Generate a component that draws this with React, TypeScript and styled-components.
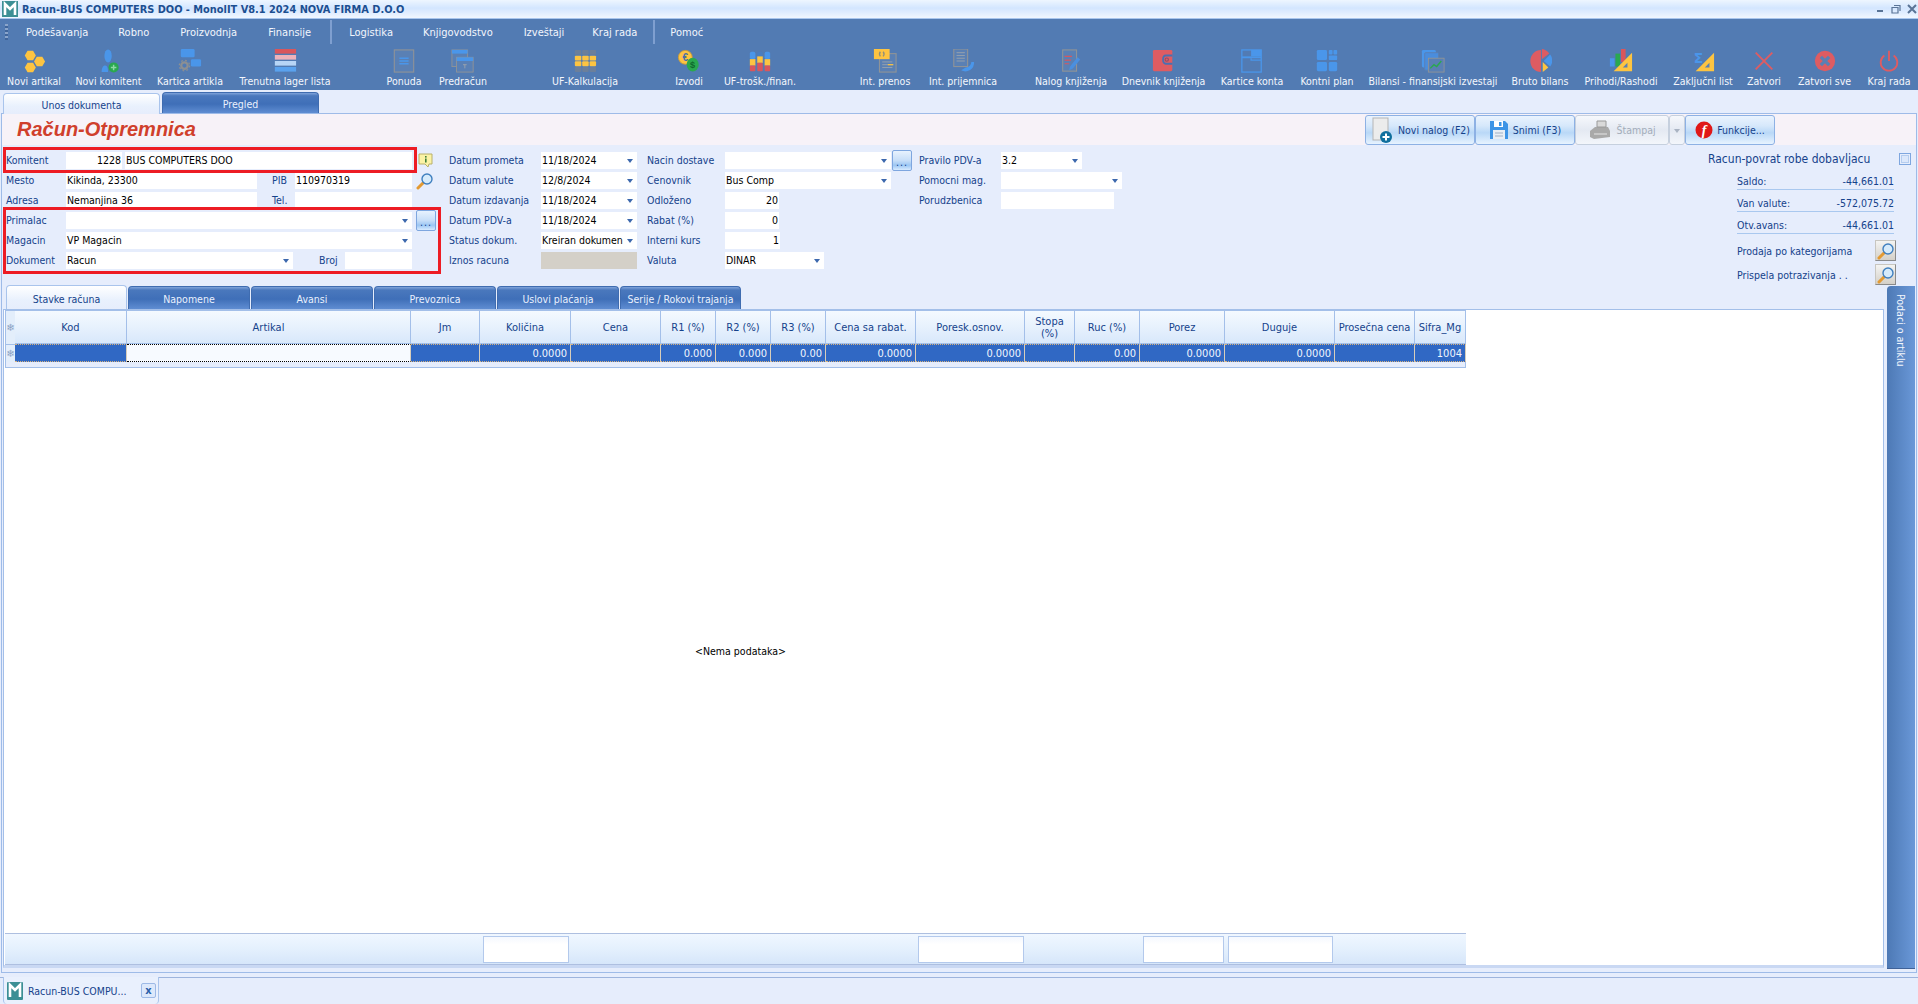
import styled, { createGlobalStyle } from "styled-components"
import { ReactNode } from "react"

const GlobalStyle = createGlobalStyle`
    html, body {
        margin: 0;
        padding: 0;
        background: #e6edfc;
    }
    * {
        box-sizing: border-box;
    }
`

const NAVY = "#15428b"
const EDGE = "#a3bfe9"

const hex = (cx: number, cy: number, r: number) =>
    [0, 60, 120, 180, 240, 300].map(a => `${cx + r * Math.cos(a * Math.PI / 180)},${cy + r * Math.sin(a * Math.PI / 180)}`).join(" ")

const Icon = ({ children, size = 24 }: { children: ReactNode, size?: number }) =>
    <svg width={size} height={size} viewBox="0 0 26 26">{children}</svg>

const DocOutline = ({ x, y, w, h }: { x: number, y: number, w: number, h: number }) =>
    <rect x={x} y={y} width={w} height={h} fill="#5a80b4" stroke="#8f9397" strokeWidth="1.2" />

const toolIcons: Record<string, ReactNode> = {
    artikal: <Icon>
        <polygon points={hex(9, 7, 6)} fill="#fdc441" />
        <polygon points={hex(9, 20, 6)} fill="#fdc441" />
        <polygon points={hex(19, 13.5, 6)} fill="#fdc441" />
    </Icon>,
    komitent: <Icon>
        <ellipse cx="12" cy="7.500" rx="4" ry="7" fill="#4a96ea" />
        <path d="M5 25 C5 20 7 18 9 18 C11 18 12 21 12 25 Z" fill="#4a96ea" />
        <circle cx="18" cy="20" r="5.500" fill="#2aa84f" />
        <path d="M18 17 V23 M15 20 H21" stroke="#8fd8a5" strokeWidth="1.6" />
    </Icon>,
    kartica: <Icon>
        <rect x="3" y="0" width="15" height="9" rx="1.5" fill="#4a96ea" />
        <rect x="14" y="11" width="11" height="8" rx="1.5" fill="#4a96ea" />
        <circle cx="7" cy="18" r="3.5" fill="none" stroke="#8c8f92" strokeWidth="2.4" />
        <circle cx="7" cy="18" r="5.6" fill="none" stroke="#8c8f92" strokeWidth="1.4" strokeDasharray="2 2.4" />
    </Icon>,
    lager: <Icon>
        <rect x="2" y="0" width="23" height="5" fill="#d9565c" />
        <rect x="2" y="6.5" width="23" height="5" fill="#eeb2ba" />
        <rect x="2" y="13" width="23" height="5" fill="#b7d5f6" />
        <rect x="2" y="19.5" width="23" height="5" fill="#5aa2ee" />
    </Icon>,
    ponuda: <Icon>
        <DocOutline x={2.5} y={1} w={21} h={24} />
        <path d="M8 10 H18 M8 13 H18 M8 16 H18" stroke="#4a96ea" strokeWidth="1.4" />
    </Icon>,
    predracun: <Icon>
        <rect x="1" y="1" width="17" height="18" fill="#5a80b4" stroke="#8f9397" />
        <rect x="1" y="1" width="17" height="4" fill="#4a96ea" />
        <rect x="6" y="9" width="18" height="16" fill="#5a80b4" stroke="#8f9397" />
        <rect x="6" y="9" width="18" height="4" fill="#4a96ea" />
        <path d="M13 17 H17 M15 17 V21" stroke="#9aa3ad" strokeWidth="1" />
    </Icon>,
    kalk: <Icon>
        {[0, 1, 2].map(c => [0, 1, 2, 3].map(r =>
            <rect key={`${c}${r}`} x={2 + c * 8} y={1 + r * 6.2} width="7" height="5.2" rx="1" fill={r === 1 || r === 2 ? "#fdc441" : "#6b7f9b"} />))}
    </Icon>,
    izvodi: <Icon>
        <circle cx="9" cy="9" r="7.5" fill="#fdc441" stroke="#c99a3a" strokeWidth="1" />
        <text x="9" y="13" textAnchor="middle" fontSize="11" fontWeight="700" fill="#4a6fa5" fontFamily="Liberation Sans">€</text>
        <ellipse cx="17" cy="17" rx="6.5" ry="7.5" fill="#2aa84f" />
        <text x="17" y="21" textAnchor="middle" fontSize="10" fontWeight="700" fill="#0f6a2c" fontFamily="Liberation Sans">$</text>
    </Icon>,
    trosk: <Icon>
        {[2, 10, 18].map((x, i) => <g key={x}>
            <rect x={x} y="3" width="6" height="8" rx="2" fill={i === 1 ? "#4a7dc0" : "#4a96ea"} />
            <rect x={x} y={i === 1 ? 8 : 11} width="6" height="7" fill="#fdc441" />
            <rect x={x} y={i === 1 ? 15 : 18} width="6" height={i === 1 ? 9 : 6} rx="1" fill="#d9565c" />
        </g>)}
    </Icon>,
    prenos: <Icon>
        <DocOutline x={7} y={5} w={18} h={20} />
        <path d="M10 14 H21 M10 17 H16 M10 20 H21" stroke="#9aa3ad" strokeWidth="1" />
        <path d="M16 17 H22" stroke="#fdc441" strokeWidth="1.4" />
        <rect x="1" y="0" width="17" height="11" fill="#fdc441" />
        <path d="M8 3 Q6 5.500 8 8 M11 3 Q13 5.500 11 8" stroke="#8f8f7a" strokeWidth="1.4" fill="none" />
    </Icon>,
    prijemnica: <Icon>
        <path d="M25 14 A9.500 9.500 0 0 1 11 23 L16 20 A6 6 0 0 0 22 14 Z" fill="#4a96ea" />
        <DocOutline x={3} y={0} w={15} h={19} />
        <path d="M6 4 H15 M6 7 H15 M6 10 H15 M6 13 H15" stroke="#9aa3ad" strokeWidth="1" />
    </Icon>,
    nalog: <Icon>
        <DocOutline x={4} y={1} w={15} h={23} />
        <path d="M6 8 H14 M6 12 H13 M6 16 H11" stroke="#d9565c" strokeWidth="1.3" />
        <path d="M12 19 L20 9 L23 11.500 L15 21 L11 23 Z" fill="#4a8fe0" />
    </Icon>,
    dnevnik: <Icon>
        <rect x="1" y="1" width="21" height="23" rx="1.5" fill="#de5c62" />
        <path d="M22 7 H15 Q12 7 12 11.500 Q12 16 15 16 H22" fill="none" stroke="#4b6fb0" strokeWidth="2" />
        <circle cx="16" cy="11.500" r="1.8" fill="none" stroke="#8d4d6a" strokeWidth="1.2" />
    </Icon>,
    kartice: <Icon>
        <rect x="2" y="1" width="21" height="24" fill="none" stroke="#4a96ea" strokeWidth="1.4" />
        <rect x="2" y="8" width="21" height="2" fill="#4a96ea" />
        <rect x="12" y="1" width="11" height="7" fill="#4a96ea" />
        <path d="M12 10 V12 H23" stroke="#4a96ea" strokeWidth="1.4" fill="none" />
    </Icon>,
    kontni: <Icon>
        <rect x="2" y="1" width="11" height="11" rx="1.5" fill="#4a96ea" />
        <rect x="15" y="1" width="4" height="5" rx="1" fill="#4a96ea" />
        <rect x="20" y="1" width="4" height="5" rx="1" fill="#4a96ea" />
        <rect x="15" y="7" width="9" height="5" rx="1" fill="#4a96ea" />
        <rect x="2" y="14" width="11" height="10" rx="1.5" fill="#4a96ea" />
        <rect x="15" y="14" width="9" height="10" rx="1.5" fill="#4a96ea" />
    </Icon>,
    bilansi: <Icon>
        <rect x="1" y="1" width="15" height="19" rx="1.5" fill="#4a96ea" />
        <rect x="4" y="4" width="15" height="19" rx="1" fill="#4a8ddd" stroke="#5a80b4" />
        <rect x="8" y="10" width="17" height="15" fill="#5a80b4" stroke="#8f9397" />
        <path d="M10 21 L14 17 L17 19 L22 13" stroke="#2aa84f" strokeWidth="1.5" fill="none" />
    </Icon>,
    bruto: <Icon>
        <path d="M14 12 L14 1 A11.500 12 0 1 0 14 25 Z" fill="#de5c62" />
        <path d="M15 0 A11 11 0 0 1 23 5 L15 11 Z" fill="#de5c62" />
        <path d="M24 6 A11 11 0 0 1 24 19 L17 13 Z" fill="#4a96ea" />
        <path d="M16 14 L22 20 L16 25 Z" fill="#fdc441" />
    </Icon>,
    prihodi: <Icon>
        <rect x="1" y="10" width="5" height="9" fill="#4a96ea" />
        <rect x="7" y="5" width="5" height="14" fill="#2aa84f" />
        <rect x="13" y="0" width="5" height="14" fill="#d9565c" />
        <path d="M25 4 V24 H5 Z" fill="#fdc441" />
        <path d="M20 15 V20 H15 Z" fill="#5a80b4" />
    </Icon>,
    zakljucni: <Icon>
        <text x="8" y="15" textAnchor="middle" fontSize="15" fontWeight="700" fill="#4a96ea" fontFamily="DejaVu Sans">Σ</text>
        <path d="M25 4 V24 H5 Z" fill="#fdc441" />
        <path d="M20 15 V20 H15 Z" fill="#5a80b4" />
    </Icon>,
    zatvori: <Icon>
        <path d="M4 4 L22 22 M22 4 L4 22" stroke="#de5c62" strokeWidth="2" />
    </Icon>,
    zatvoriSve: <Icon>
        <circle cx="13" cy="13" r="11" fill="#de5c62" />
        <path d="M8.500 8.500 L17.500 17.500 M17.500 8.500 L8.500 17.500" stroke="#5a80b4" strokeWidth="3.600" />
    </Icon>,
    krajRada: <Icon>
        <path d="M8 7 A9 9 0 1 0 18 7" fill="none" stroke="#de5c62" strokeWidth="2" />
        <path d="M13 2 V13" stroke="#de5c62" strokeWidth="2" />
    </Icon>,
}

const tools = [
    { label: "Novi artikal", icon: "artikal", w: 68, gap: 0 },
    { label: "Novi komitent", icon: "komitent", w: 81, gap: 0 },
    { label: "Kartica artikla", icon: "kartica", w: 82, gap: 0 },
    { label: "Trenutna lager lista", icon: "lager", w: 108, gap: 0 },
    { label: "Ponuda", icon: "ponuda", w: 40, gap: 45 },
    { label: "Predračun", icon: "predracun", w: 78, gap: 0 },
    { label: "UF-Kalkulacija", icon: "kalk", w: 76, gap: 45 },
    { label: "Izvodi", icon: "izvodi", w: 40, gap: 46 },
    { label: "UF-trošk./finan.", icon: "trosk", w: 102, gap: 0 },
    { label: "Int. prenos", icon: "prenos", w: 70, gap: 39 },
    { label: "Int. prijemnica", icon: "prijemnica", w: 86, gap: 0 },
    { label: "Nalog knjiženja", icon: "nalog", w: 80, gap: 25 },
    { label: "Dnevnik knjiženja", icon: "dnevnik", w: 105, gap: 0 },
    { label: "Kartice konta", icon: "kartice", w: 72, gap: 0 },
    { label: "Kontni plan", icon: "kontni", w: 78, gap: 0 },
    { label: "Bilansi - finansijski izvestaji", icon: "bilansi", w: 134, gap: 0 },
    { label: "Bruto bilans", icon: "bruto", w: 80, gap: 0 },
    { label: "Prihodi/Rashodi", icon: "prihodi", w: 82, gap: 0 },
    { label: "Zaključni list", icon: "zakljucni", w: 82, gap: 0 },
    { label: "Zatvori", icon: "zatvori", w: 40, gap: 0 },
    { label: "Zatvori sve", icon: "zatvoriSve", w: 81, gap: 0 },
    { label: "Kraj rada", icon: "krajRada", w: 48, gap: 0 },
]

const columns = [
    { title: "Kod", w: 112, value: "" },
    { title: "Artikal", w: 284, value: "", editing: true },
    { title: "Jm", w: 69, value: "" },
    { title: "Količina", w: 91, value: "0.0000" },
    { title: "Cena", w: 90, value: "" },
    { title: "R1 (%)", w: 55, value: "0.000" },
    { title: "R2 (%)", w: 55, value: "0.000" },
    { title: "R3 (%)", w: 55, value: "0.00" },
    { title: "Cena sa rabat.", w: 90, value: "0.0000" },
    { title: "Poresk.osnov.", w: 109, value: "0.0000" },
    { title: "Stopa (%)", w: 50, value: "" },
    { title: "Ruc (%)", w: 65, value: "0.00" },
    { title: "Porez", w: 85, value: "0.0000" },
    { title: "Duguje", w: 110, value: "0.0000" },
    { title: "Prosečna cena", w: 80, value: "" },
    { title: "Sifra_Mg", w: 51, value: "1004" },
]

const Field = ({ label, labelW, w, value, arrow, right, grey }: { label: string, labelW: number, w: number, value?: string, arrow?: boolean, right?: boolean, grey?: boolean }) =>
    <FormRow>
        <Label $w={labelW}>{label}</Label>
        <Input $w={w} $right={right} $grey={grey}>
            <span>{value}</span>
            {arrow && <Arrow />}
        </Input>
    </FormRow>

const SearchGlass = () => <svg width="18" height="18" viewBox="0 0 18 18">
    <path d="M7 11 L2 16" stroke="#e39a32" strokeWidth="3" strokeLinecap="round" />
    <circle cx="11" cy="7" r="5" fill="#d6ebfb" stroke="#3f7fbf" strokeWidth="1.4" />
</svg>

const App = () => <Page>
    <GlobalStyle />
    <TitleBar>
        <svg width="16" height="16" viewBox="0 0 16 16">
            <rect width="16" height="16" fill="#3c8f95" />
            <path d="M3 14 V3 L8 8 L13 3 V14" stroke="#fff" strokeWidth="2.600" fill="none" />
        </svg>
        <TitleText>Racun-BUS COMPUTERS DOO - MonolIT V8.1 2024 NOVA FIRMA D.O.O</TitleText>
        <WindowButtons>
            <svg width="10" height="10" viewBox="0 0 10 10"><rect x="2" y="6" width="6" height="2" fill="#5a7497" /></svg>
            <svg width="10" height="10" viewBox="0 0 10 10"><path d="M1 3.500 H7 V9 H1 Z M3 1.500 H9 V7" fill="none" stroke="#5a7497" strokeWidth="1.200" /></svg>
            <svg width="10" height="10" viewBox="0 0 10 10"><path d="M1 1 L9 9 M9 1 L1 9" stroke="#5a7497" strokeWidth="2" /></svg>
        </WindowButtons>
    </TitleBar>
    <MenuStrip>
        <Grip />
        <MenuItem $gap={18}>Podešavanja</MenuItem>
        <MenuItem $gap={30}>Robno</MenuItem>
        <MenuItem $gap={31}>Proizvodnja</MenuItem>
        <MenuItem $gap={31}>Finansije</MenuItem>
        <MenuSeparator $gap={19} />
        <MenuItem $gap={17}>Logistika</MenuItem>
        <MenuItem $gap={30}>Knjigovodstvo</MenuItem>
        <MenuItem $gap={31}>Izveštaji</MenuItem>
        <MenuItem $gap={28}>Kraj rada</MenuItem>
        <MenuSeparator $gap={16} />
        <MenuItem $gap={15}>Pomoć</MenuItem>
    </MenuStrip>
    <Toolbar>
        {tools.map(t => <ToolButton key={t.label} $w={t.w} $gap={t.gap}>
            <ToolIcon>{toolIcons[t.icon]}</ToolIcon>
            <ToolLabel>{t.label}</ToolLabel>
        </ToolButton>)}
    </Toolbar>
    <DocTabs>
        <ActiveTab $w={157}>Unos dokumenta</ActiveTab>
        <BlueTab $w={157}>Pregled</BlueTab>
    </DocTabs>
    <MainPanel>
        <DocHeader>
            <DocTitle>Račun-Otpremnica</DocTitle>
            <ActionBar>
                <ActionButton $w={110}>
                    <svg width="24" height="26" viewBox="0 0 24 26">
                        <rect x="3" y="1" width="15" height="22" fill="#ececec" stroke="#b5b5b5" />
                        <circle cx="16" cy="20" r="6" fill="#0f6f9d" />
                        <path d="M16 16.500 V23.500 M12.500 20 H19.500" stroke="#fff" strokeWidth="2" />
                    </svg>
                    Novi nalog (F2)
                </ActionButton>
                <ActionButton $w={100}>
                    <svg width="20" height="20" viewBox="0 0 20 20">
                        <path d="M1 1 H16 L19 4 V19 H1 Z" fill="#3d94e6" />
                        <rect x="5" y="1" width="9" height="6" fill="#fff" />
                        <rect x="10" y="2" width="2.500" height="4" fill="#3d94e6" />
                        <rect x="4" y="10" width="12" height="9" fill="#e8eef5" />
                        <path d="M6 13 H14 M6 16 H14" stroke="#9fb0c4" />
                    </svg>
                    Snimi (F3)
                </ActionButton>
                <ActionButton $w={94} $disabled>
                    <svg width="24" height="20" viewBox="0 0 24 20">
                        <path d="M2 11 L7 7 H20 L22 11 V17 L6 19 L2 17 Z" fill="#a9a9a9" />
                        <path d="M9 7 V1 H18 V7 Z" fill="#d9d9d9" stroke="#9a9a9a" />
                        <path d="M6 14 H19" stroke="#e5e5e5" />
                    </svg>
                    Štampaj
                </ActionButton>
                <ActionDrop><Arrow $muted /></ActionDrop>
                <ActionButton $w={90}>
                    <svg width="18" height="18" viewBox="0 0 18 18">
                        <circle cx="9" cy="9" r="8.500" fill="#e01818" />
                        <text x="9" y="14" textAnchor="middle" fontSize="14" fontStyle="italic" fontWeight="700" fill="#fff" fontFamily="Liberation Serif">f</text>
                    </svg>
                    Funkcije...
                </ActionButton>
            </ActionBar>
        </DocHeader>
        <FormArea>
            <LeftColumn>
                <RedFrame $top={-5} $height={26} $width={414} />
                <RedFrame $top={55} $height={67} $width={438} />
                <FormRow>
                    <Label $w={60}>Komitent</Label>
                    <Input $w={56} $right><span>1228</span></Input>
                    <Input $w={287} $gap={3}><span>BUS COMPUTERS DOO</span></Input>
                    <RowIcon $gap={6}>
                        <svg width="15" height="15" viewBox="0 0 15 15">
                            <path d="M1 1 H14 V11 H11 L10 14 L7 11 H1 Z" fill="#fbf3a6" stroke="#b8b06a" />
                            <rect x="7" y="3" width="1.600" height="1.600" fill="#3f7f3a" />
                            <rect x="7" y="5.500" width="1.600" height="4" fill="#3f7f3a" />
                        </svg>
                    </RowIcon>
                </FormRow>
                <FormRow>
                    <Label $w={60}>Mesto</Label>
                    <Input $w={191}><span>Kikinda, 23300</span></Input>
                    <Label $w={23} $gap={15}>PIB</Label>
                    <Input $w={117}><span>110970319</span></Input>
                    <RowIcon $gap={4}><SearchGlass /></RowIcon>
                </FormRow>
                <FormRow>
                    <Label $w={60}>Adresa</Label>
                    <Input $w={191}><span>Nemanjina 36</span></Input>
                    <Label $w={23} $gap={15}>Tel.</Label>
                    <Input $w={117} />
                </FormRow>
                <FormRow>
                    <Label $w={60}>Primalac</Label>
                    <Input $w={346}><span /><Arrow /></Input>
                    <DotsButton $gap={4}>...</DotsButton>
                </FormRow>
                <Field label="Magacin" labelW={60} w={346} value="VP Magacin" arrow />
                <FormRow>
                    <Label $w={60}>Dokument</Label>
                    <Input $w={227}><span>Racun</span><Arrow /></Input>
                    <Label $w={26} $gap={26}>Broj</Label>
                    <Input $w={67} />
                </FormRow>
            </LeftColumn>
            <DateColumn>
                <Field label="Datum prometa" labelW={92} w={96} value="11/18/2024" arrow />
                <Field label="Datum valute" labelW={92} w={96} value="12/8/2024" arrow />
                <Field label="Datum izdavanja" labelW={92} w={96} value="11/18/2024" arrow />
                <Field label="Datum PDV-a" labelW={92} w={96} value="11/18/2024" arrow />
                <Field label="Status dokum." labelW={92} w={96} value="Kreiran dokumen" arrow />
                <Field label="Iznos racuna" labelW={92} w={96} grey />
            </DateColumn>
            <PriceColumn>
                <FormRow>
                    <Label $w={78}>Nacin dostave</Label>
                    <Input $w={166}><span /><Arrow /></Input>
                    <DotsButton $gap={1}>...</DotsButton>
                </FormRow>
                <Field label="Cenovnik" labelW={78} w={166} value="Bus Comp" arrow />
                <Field label="Odloženo" labelW={78} w={54} value="20" right />
                <Field label="Rabat (%)" labelW={78} w={54} value="0" right />
                <Field label="Interni kurs" labelW={78} w={55} value="1" right />
                <Field label="Valuta" labelW={78} w={99} value="DINAR" arrow />
            </PriceColumn>
            <TaxColumn>
                <Field label="Pravilo PDV-a" labelW={82} w={81} value="3.2" arrow />
                <Field label="Pomocni mag." labelW={82} w={121} arrow />
                <Field label="Porudzbenica" labelW={82} w={113} />
            </TaxColumn>
            <SummaryColumn>
                <ReturnRow>
                    Racun-povrat robe dobavljacu
                    <CheckBox />
                </ReturnRow>
                <SummaryRow><span>Saldo:</span><span>-44,661.01</span></SummaryRow>
                <SummaryRow><span>Van valute:</span><span>-572,075.72</span></SummaryRow>
                <SummaryRow><span>Otv.avans:</span><span>-44,661.01</span></SummaryRow>
                <LookupRow $gap={6}>Prodaja po kategorijama<LookupButton><SearchGlass /></LookupButton></LookupRow>
                <LookupRow $gap={3}>Prispela potrazivanja . .<LookupButton><SearchGlass /></LookupButton></LookupRow>
            </SummaryColumn>
        </FormArea>
        <LowerArea>
            <LowerLeft>
                <SectionTabs>
                    <ActiveTab $w={121}>Stavke računa</ActiveTab>
                    <BlueTab $w={122}>Napomene</BlueTab>
                    <BlueTab $w={122}>Avansi</BlueTab>
                    <BlueTab $w={122}>Prevoznica</BlueTab>
                    <BlueTab $w={122}>Uslovi plaćanja</BlueTab>
                    <BlueTab $w={121}>Serije / Rokovi trajanja</BlueTab>
                </SectionTabs>
                <GridPanel>
                    <GridHead>
                        <RowMark $h={34}>❄</RowMark>
                        {columns.map(c => <HeadCell key={c.title} $w={c.w}>{c.title}</HeadCell>)}
                    </GridHead>
                    <GridRow>
                        <RowMark $h={18}>❄</RowMark>
                        {columns.map(c => <DataCell key={c.title} $w={c.w} $editing={c.editing}>{c.value}</DataCell>)}
                    </GridRow>
                    <GridPad />
                    <EmptyArea>&lt;Nema podataka&gt;</EmptyArea>
                    <GridFooter>
                        <FooterBox $w={86} $gap={478} />
                        <FooterBox $w={106} $gap={349} />
                        <FooterBox $w={81} $gap={119} />
                        <FooterBox $w={105} $gap={4} />
                    </GridFooter>
                </GridPanel>
            </LowerLeft>
            <SideTab>Podaci o artiklu</SideTab>
        </LowerArea>
    </MainPanel>
    <WindowBar>
        <WindowTab>
            <svg width="16" height="18" viewBox="0 0 16 18">
                <rect width="16" height="18" rx="1" fill="#3c8f95" />
                <path d="M3 15 V3 L8 8 L13 3 V15" stroke="#fff" strokeWidth="2.600" fill="none" />
            </svg>
            <WindowTabText>Racun-BUS COMPU...</WindowTabText>
            <CloseBox>x</CloseBox>
        </WindowTab>
    </WindowBar>
</Page>

export default App

const Page = styled.div`
    width: 1918px;
    height: 1004px;
    display: flex;
    flex-direction: column;
    overflow: hidden;
    background: #e6edfc;
    color: ${NAVY};
    font-family: "DejaVu Sans Condensed", "Liberation Sans", sans-serif;
    font-size: 11px;
`

const TitleBar = styled.div`
    flex: 0 0 19px;
    display: flex;
    align-items: center;
    padding-left: 2px;
    background: linear-gradient(#eef6ff, #d3e6ff 45%, #e0edff 70%, #f1f7ff);
    border-bottom: 1px solid #a9c6ee;
`

const TitleText = styled.div`
    margin-left: 4px;
    font-size: 10.9px;
    font-weight: 700;
    color: #1c4f91;
`

const WindowButtons = styled.div`
    margin-left: auto;
    display: flex;
    gap: 6px;
    padding-right: 1px;
`

const MenuStrip = styled.div`
    flex: 0 0 26px;
    display: flex;
    align-items: center;
    background: #527bb3;
    padding-left: 4px;
`

const Grip = styled.div`
    width: 3px;
    height: 16px;
    margin-left: 1px;
    background: repeating-linear-gradient(#8aa5cb 0 2px, #3f659b 2px 4px);
`

const MenuItem = styled.div<{ $gap: number }>`
    margin-left: ${({ $gap }) => $gap}px;
    color: #f2f6fd;
    white-space: nowrap;
`

const MenuSeparator = styled.div<{ $gap: number }>`
    width: 2px;
    height: 24px;
    margin-left: ${({ $gap }) => $gap}px;
    background: #7f9fd0;
`

const Toolbar = styled.div`
    flex: 0 0 45px;
    display: flex;
    background: #527bb3;
`

const ToolButton = styled.div<{ $w: number, $gap: number }>`
    flex: 0 0 ${({ $w }) => $w}px;
    margin-left: ${({ $gap }) => $gap}px;
    display: flex;
    flex-direction: column;
    align-items: center;
    white-space: nowrap;
`

const ToolIcon = styled.div`
    height: 29px;
    padding-top: 4px;
    display: flex;
    justify-content: center;
    svg {
        display: block;
    }
`

const ToolLabel = styled.div`
    font-size: 10.5px;
    line-height: 14px;
    color: #f4f7fd;
`

const DocTabs = styled.div`
    flex: 0 0 23px;
    display: flex;
    align-items: flex-end;
    gap: 2px;
    padding-left: 3px;
    padding-top: 2px;
`

const ActiveTab = styled.div<{ $w: number }>`
    flex: 0 0 ${({ $w }) => $w}px;
    height: 100%;
    display: flex;
    align-items: center;
    justify-content: center;
    padding-top: 2px;
    font-size: 10.5px;
    color: ${NAVY};
    background: linear-gradient(#ffffff, #e9f1fd 60%, #e6edfc);
    border: 1px solid #a9c4ec;
    border-bottom: none;
    border-radius: 4px 4px 0 0;
    position: relative;
    z-index: 1;
    margin-bottom: -1px;
`

const BlueTab = styled.div<{ $w: number }>`
    flex: 0 0 ${({ $w }) => $w}px;
    height: 100%;
    display: flex;
    align-items: center;
    justify-content: center;
    padding-top: 2px;
    white-space: nowrap;
    font-size: 10.5px;
    color: #eaf1fe;
    background: linear-gradient(#7fa3da, #4a78bd 14%, #3f6fb8 55%, #5f8dd2);
    border: 1px solid #3f6cb0;
    border-bottom: none;
    border-radius: 4px 4px 0 0;
`

const MainPanel = styled.div`
    flex: 0 0 860px;
    margin: 0 1px;
    display: flex;
    flex-direction: column;
    border: 1px solid #9ebbe8;
`

const DocHeader = styled.div`
    flex: 0 0 31px;
    display: flex;
    align-items: flex-start;
    background: #f7f2f8;
    padding-left: 15px;
`

const DocTitle = styled.div`
    font-family: "Liberation Sans", sans-serif;
    font-size: 20px;
    font-weight: 700;
    font-style: italic;
    color: #d03f2c;
    line-height: 30px;
`

const ActionBar = styled.div`
    margin-left: auto;
    margin-right: 141px;
    padding-top: 1px;
    display: flex;
`

const ActionButton = styled.div<{ $w: number, $disabled?: boolean }>`
    width: ${({ $w }) => $w}px;
    height: 30px;
    display: flex;
    align-items: center;
    justify-content: center;
    gap: 4px;
    white-space: nowrap;
    font-size: 10.5px;
    color: ${({ $disabled }) => $disabled ? "#a3adba" : NAVY};
    background: ${({ $disabled }) => $disabled
        ? "linear-gradient(#f6f8fc, #e4e9f2 50%, #f3f6fb)"
        : "linear-gradient(#eaf3fe, #d6e8fb 35%, #b9d8f7 60%, #e7f3ff)"};
    border: 1px solid ${({ $disabled }) => $disabled ? "#c6d0de" : "#8db1e4"};
    border-radius: 3px;
`

const ActionDrop = styled(ActionButton).attrs({ $w: 16, $disabled: true })``

const FormArea = styled.div`
    flex: 0 0 140px;
    min-height: 0;
    display: flex;
    padding: 7px 0 0 4px;
`

const LeftColumn = styled.div`
    position: relative;
    flex: 0 0 443px;
`

const RedFrame = styled.div<{ $top: number, $height: number, $width: number }>`
    position: absolute;
    left: -3px;
    top: ${({ $top }) => $top}px;
    height: ${({ $height }) => $height}px;
    width: ${({ $width }) => $width}px;
    border: 3px solid #ed1c24;
    pointer-events: none;
`

const DateColumn = styled.div`
    flex: 0 0 198px;
`

const PriceColumn = styled.div`
    flex: 0 0 272px;
`

const TaxColumn = styled.div`
    flex: 0 0 790px;
`

const SummaryColumn = styled.div`
    flex: 1;
    margin-top: -7px;
    padding-right: 6px;
`

const FormRow = styled.div`
    display: flex;
    align-items: center;
    height: 17px;
    margin-bottom: 3px;
    font-size: 10.5px;
`

const Label = styled.div<{ $w: number, $gap?: number }>`
    flex: 0 0 ${({ $w }) => $w}px;
    margin-left: ${({ $gap }) => $gap ?? 0}px;
    padding-bottom: 2px;
    white-space: nowrap;
    color: ${NAVY};
`

const Input = styled.div<{ $w: number, $right?: boolean, $grey?: boolean, $gap?: number }>`
    flex: 0 0 ${({ $w }) => $w}px;
    height: 17px;
    margin-left: ${({ $gap }) => $gap ?? 0}px;
    display: flex;
    align-items: center;
    justify-content: ${({ $right }) => $right ? "flex-end" : "space-between"};
    padding: 0 1px 2px 1px;
    color: #000;
    white-space: nowrap;
    overflow: hidden;
    background: ${({ $grey }) => $grey ? "#d4d0c8" : "#fff"};
`

const Arrow = styled.i<{ $muted?: boolean }>`
    flex: none;
    width: 0;
    height: 0;
    margin: 2px 3px 0 2px;
    border-left: 3.5px solid transparent;
    border-right: 3.5px solid transparent;
    border-top: 4px solid ${({ $muted }) => $muted ? "#a9b3c2" : "#3c68ad"};
`

const RowIcon = styled.div<{ $gap: number }>`
    margin-left: ${({ $gap }) => $gap}px;
    display: flex;
    svg {
        display: block;
    }
`

const DotsButton = styled.div<{ $gap: number }>`
    flex: 0 0 20px;
    height: 21px;
    margin-left: ${({ $gap }) => $gap}px;
    display: flex;
    align-items: flex-end;
    justify-content: center;
    padding-bottom: 3px;
    line-height: 10px;
    letter-spacing: 1px;
    color: ${NAVY};
    background: linear-gradient(#e8f2fe, #c7def8 50%, #9cc6f3 75%, #d8ebff);
    border: 1px solid #7ea6df;
    border-radius: 2px;
`

const ReturnRow = styled.div`
    height: 23px;
    padding-top: 4px;
    display: flex;
    align-items: center;
    justify-content: space-between;
    font-size: 12px;
    margin: 0 -1px 0 -1px;
`

const CheckBox = styled.div`
    width: 12px;
    height: 12px;
    border: 1px solid #7ea6df;
    box-shadow: inset 0 0 0 1px #e6edfc, inset 0 0 0 2px #b5cdef;
    background: #dbe7fb;
`

const SummaryRow = styled.div`
    height: 22px;
    margin: 0 16px 0 28px;
    padding-top: 7px;
    display: flex;
    justify-content: space-between;
    border-bottom: 1px solid #a9c8ef;
    font-size: 10.5px;
`

const LookupRow = styled.div<{ $gap: number }>`
    height: 21px;
    margin: ${({ $gap }) => $gap}px 14px 0 28px;
    display: flex;
    align-items: center;
    justify-content: space-between;
    white-space: nowrap;
    font-size: 10.5px;
`

const LookupButton = styled.div`
    width: 21px;
    height: 21px;
    display: flex;
    align-items: center;
    justify-content: center;
    background: linear-gradient(#f4f4f2, #d4d0c8);
    border: 1px solid #c8c6c0;
    border-right-color: #8a8a8a;
    border-bottom-color: #8a8a8a;
`

const LowerArea = styled.div`
    flex: 1;
    min-height: 0;
    display: flex;
    padding-left: 1px;
`

const LowerLeft = styled.div`
    flex: 0 0 1881px;
    display: flex;
    flex-direction: column;
    height: 683px;
`

const SectionTabs = styled.div`
    flex: 0 0 24px;
    display: flex;
    gap: 1px;
    padding-left: 3px;
    ${BlueTab} {
        height: 23px;
        margin-top: 1px;
    }
`

const GridPanel = styled.div`
    flex: 1;
    min-height: 0;
    display: flex;
    flex-direction: column;
    padding: 0 0 0 1px;
    background: #fff;
    border: 1px solid ${EDGE};
    border-bottom: 3px solid #c9d8f3;
`

const GridHead = styled.div`
    flex: 0 0 34px;
    width: 1461px;
    display: flex;
`

const GridRow = styled.div`
    flex: 0 0 18px;
    width: 1461px;
    display: flex;
    background: #3068c4;
`

const RowMark = styled.div<{ $h: number }>`
    flex: 0 0 10px;
    height: ${({ $h }) => $h}px;
    display: flex;
    align-items: center;
    justify-content: center;
    font-family: "DejaVu Sans", sans-serif;
    font-size: 10px;
    color: #8ba3c5;
    background: #e3eefb;
    border: 1px solid ${EDGE};
    border-width: 1px 0 0 1px;
`

const HeadCell = styled.div<{ $w: number }>`
    flex: 0 0 ${({ $w }) => $w}px;
    padding: 2px 2px 0;
    display: flex;
    align-items: center;
    justify-content: center;
    text-align: center;
    line-height: 12px;
    color: ${NAVY};
    background: linear-gradient(#f4f9ff, #e7f1fd 50%, #d8e8fb);
    border: 1px solid ${EDGE};
    border-width: 1px 1px 1px 0;
`

const DataCell = styled.div<{ $w: number, $editing?: boolean }>`
    flex: 0 0 ${({ $w }) => $w}px;
    padding: 1px 3px 0 0;
    display: flex;
    align-items: center;
    justify-content: flex-end;
    color: #f1f5fd;
    background: ${({ $editing }) => $editing ? "#f7faff" : "#3068c4"};
    border-right: 1px solid #d8cdbb;
    border-top: 1px dotted ${({ $editing }) => $editing ? "#000" : "#d7b27e"};
    border-bottom: 1px dotted ${({ $editing }) => $editing ? "#000" : "#d7b27e"};
`

const GridPad = styled.div`
    flex: 0 0 6px;
    width: 1461px;
    background: #e6edfc;
    border: 1px solid ${EDGE};
    border-top: none;
`

const EmptyArea = styled.div`
    flex: 1;
    width: 1461px;
    padding-left: 10px;
    display: flex;
    align-items: center;
    justify-content: center;
    font-size: 10.5px;
    color: #000;
`

const GridFooter = styled.div`
    flex: 0 0 32px;
    width: 1461px;
    display: flex;
    align-items: center;
    background: linear-gradient(#f0f7ff, #e4f0fd 50%, #d6e6fa);
    border-top: 1px solid #aebfe0;
    border-bottom: 1px solid #aebfe0;
`

const FooterBox = styled.div<{ $w: number, $gap: number }>`
    flex: 0 0 ${({ $w }) => $w}px;
    height: 27px;
    margin-left: ${({ $gap }) => $gap}px;
    background: linear-gradient(#f5f8fe, #fff 30%);
    border: 1px solid #b3c9ec;
`

const SideTab = styled.div`
    flex: 0 0 28px;
    height: 683px;
    margin: 1px 0 0 3px;
    padding-top: 8px;
    writing-mode: vertical-rl;
    color: #f2f6fd;
    font-size: 10.5px;
    line-height: 28px;
    background: linear-gradient(90deg, #4d79b5, #6a98d8);
    border-radius: 4px 0 0 0;
    border-bottom: 1px solid #3f6298;
`

const WindowBar = styled.div`
    flex: 1;
    margin-top: 4px;
    display: flex;
    padding-left: 3px;
    border-top: 1px solid #9db4dd;
`

const WindowTab = styled.div`
    flex: 0 0 156px;
    display: flex;
    align-items: center;
    gap: 5px;
    padding-left: 3px;
    border: 1px solid #a9c4ec;
    border-top: none;
    border-bottom: none;
    border-radius: 0 0 4px 4px;
    background: #e9f0fd;
    margin-top: -1px;
`

const WindowTabText = styled.div`
    flex: 1;
    font-size: 10.5px;
    white-space: nowrap;
`

const CloseBox = styled.div`
    flex: 0 0 15px;
    height: 15px;
    margin-right: 2px;
    display: flex;
    align-items: center;
    justify-content: center;
    font-weight: 700;
    line-height: 12px;
    color: #2a5ea8;
    background: #dce8fb;
    border: 1px solid #9db9e6;
    border-radius: 2px;
`
